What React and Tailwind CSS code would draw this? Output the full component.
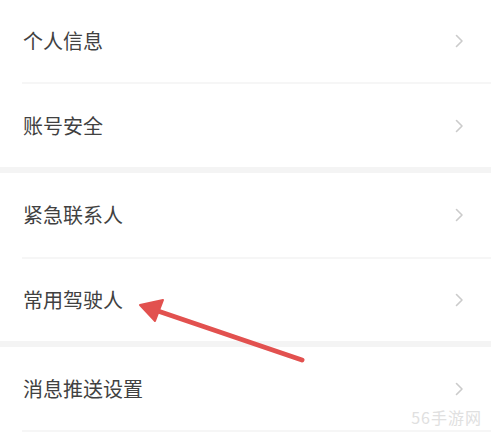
import { Fragment } from "react";

const groups = [
  [
    { label: "个人信息", h: "h-[82px]" },
    { label: "账号安全", h: "h-[83px]" },
  ],
  [
    { label: "紧急联系人", h: "h-[84px]" },
    { label: "常用驾驶人", h: "h-[82px]" },
  ],
  [{ label: "消息推送设置", h: "h-[83px]" }],
];

const Chevron = () => (
  <svg width="9" height="14" viewBox="0 0 9 14" fill="none">
    <path
      d="M1.5 1.5 L7 7 L1.5 12.5"
      stroke="#cbcbcb"
      strokeWidth="1.6"
      strokeLinecap="round"
      strokeLinejoin="round"
    />
  </svg>
);

const Row = ({ label, h }) => (
  <div className={"flex items-center justify-between pl-[23px] pr-[27px] " + h}>
    <span className="text-[20px] leading-none text-[#414141]">{label}</span>
    <Chevron />
  </div>
);

const App = () => {
  return (
    <div
      className="relative w-[491px] h-[432px] overflow-hidden bg-white"
      style={{ fontFamily: '"Noto Sans CJK SC", "Noto Sans", sans-serif' }}
    >
      {groups.map((rows, gi) => (
        <Fragment key={gi}>
          {gi > 0 && <div className="h-[6px] bg-[#f4f4f4]"></div>}
          {rows.map((row, ri) => (
            <Fragment key={row.label}>
              <Row label={row.label} h={row.h} />
              {(ri < rows.length - 1 || gi === groups.length - 1) && (
                <div className="ml-[22px] h-[2px] bg-[#f6f6f6]"></div>
              )}
            </Fragment>
          ))}
        </Fragment>
      ))}

      {/* red annotation arrow */}
      <svg
        className="absolute left-0 top-0 pointer-events-none"
        width="491"
        height="432"
        viewBox="0 0 491 432"
      >
        <line
          x1="302"
          y1="360"
          x2="152"
          y2="309"
          stroke="#e2514f"
          strokeWidth="5"
          strokeLinecap="round"
        />
        <polygon points="140,305 163,300 155,321" fill="#e2514f" stroke="#e2514f" strokeWidth="2" strokeLinejoin="round" />
      </svg>

      {/* watermark */}
      <div className="absolute right-[9px] bottom-[7px] text-[16px] leading-none text-[#e0e0e0] tracking-[1px]">
        56手游网
      </div>
    </div>
  );
};

export default App;
